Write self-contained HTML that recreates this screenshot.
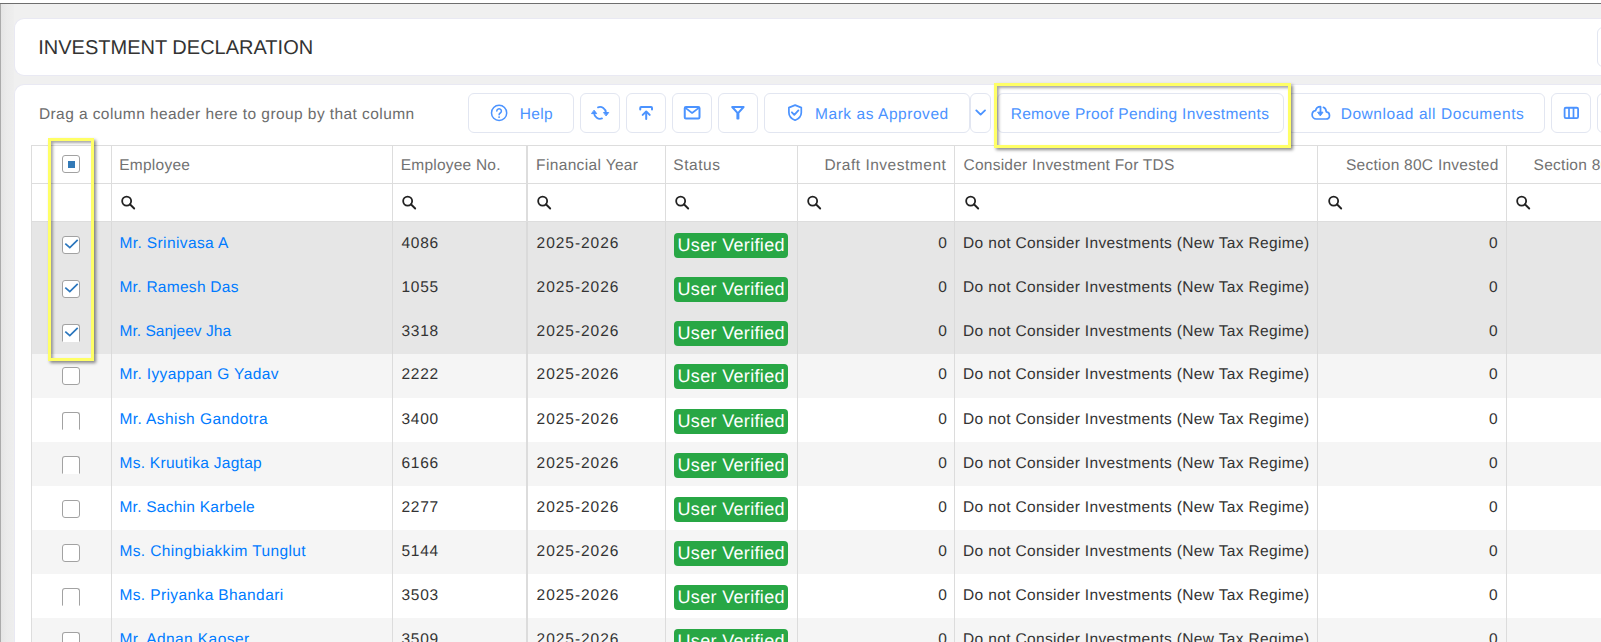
<!DOCTYPE html><html lang="en"><head><meta charset="utf-8"><title>Investment Declaration</title><style>
*{box-sizing:border-box}
html,body{margin:0;padding:0}
body{width:1601px;height:642px;overflow:hidden;position:relative;background:#fff;font-family:"Liberation Sans",sans-serif;font-size:15.5px;color:#333;text-rendering:geometricPrecision}
#frame{position:absolute;left:0;top:0;width:1601px;height:642px;overflow:hidden;background:linear-gradient(#fff 0,#fff 3px,#6e6e6e 3px,#6e6e6e 4px,#f0f0f0 4px)}
#lb{position:absolute;left:0;top:4px;width:1px;height:640px;background:#ababab}
#lshade{position:absolute;left:1px;top:4px;width:13px;height:640px;background:linear-gradient(to right,#e5e5e5,#ebebeb 45%,#eeeeee)}
.card{position:absolute;background:#fff;border-radius:9px;box-shadow:0 0 0 1px #e9e9f3}
#c1{left:15px;top:19px;width:1700px;height:56px}
#c2{left:15px;top:85px;width:1700px;height:700px}
.t{white-space:nowrap}
#title{position:absolute;left:39px;top:36px;font-size:20px;line-height:24px;color:#333;white-space:nowrap}
#drag{position:absolute;left:39px;top:105px;line-height:20px;color:#6c6c6c;white-space:nowrap}
.btn{position:absolute;top:93px;height:40px;border:1px solid #e2e6f1;border-radius:6px;background:#fff;color:#4b93ff;white-space:nowrap;line-height:38px}
.btn svg{position:absolute}
.btn .t{position:absolute;top:2px}
table{position:absolute;left:31px;top:145px;border-collapse:separate;border-spacing:0;table-layout:fixed;width:1664px}
td,th{padding:0;margin:0;font-weight:normal;white-space:nowrap;overflow:hidden;text-align:left;border-right:1px solid #ddd;position:relative}
th{height:39px;border-top:1px solid #ddd;border-bottom:1px solid #ddd;color:#727272;padding:2px 8px 0 8px}
tr.f td{height:38px;border-bottom:1px solid #ddd;padding:0 8px}
tr.r td{height:44px;padding:0 8px 1px 8px;border-right-color:#dcdcdc}
tr.r.sel td{background:#e6e6e6;border-right-color:#dadada}
tr.r.alt td{background:#f5f5f5}
tr.r.up td > *{position:relative;top:-1px}
td.first,th.first{border-left:1px solid #ddd}
td.b2,th.b2{border-right-width:2px}
.num{text-align:right}
a{color:#007bff;text-decoration:none}
.badge{position:absolute !important;left:8px;top:11px !important;width:114px;height:25px;border-radius:4px;background:#28a745;color:#fff;font-size:18px;line-height:25px;text-align:center}
tr.up .badge{top:10px !important}
.cb{position:absolute !important;left:30px;top:14px !important;width:18px;height:18px;border:1px solid #a2a2a2;border-radius:3px;background:#fff}
tr.up .cb{top:13px !important}
th .cb{top:9px !important}
.cb.nb{border-bottom-color:#fff;border-radius:3px 3px 0 0}
.cb.ind:after{content:"";position:absolute;left:5px;top:5px;width:7px;height:7px;background:#337ab7}
.cb svg{position:absolute;left:0;top:0}
.s{position:absolute;left:8.6px;top:10.5px}
#hl1,#hl2{position:absolute;border:3px solid #ffff66;box-shadow:2px 2px 3px rgba(0,0,0,.45), inset 2px 2px 3px rgba(0,0,0,.35)}
#hl1{left:48px;top:138px;width:46px;height:223px}
#hl2{left:994px;top:83px;width:297px;height:65px}
</style></head><body>
<div id="frame"><div id="lb"></div><div id="lshade"></div>
<div class="card" id="c1"></div><div class="card" id="c2"></div>
<div id="title"><span class="t " style="letter-spacing:0.002px;position:relative;left:-0.77px;">INVESTMENT DECLARATION</span></div>
<div class="btn" style="left:1597px;top:27px;width:40px"></div>
<div id="drag"><span class="t " style="letter-spacing:0.422px;position:relative;left:-0.12px;">Drag a column header here to group by that column</span></div>
<div class="btn" style="left:468px;width:106px;"><svg style="left:21px;top:10px" width="18" height="18" viewBox="0 0 18 18" fill="none" stroke="#4b93ff" stroke-width="1.8" stroke-linecap="round" stroke-linejoin="round"><circle cx="9.1" cy="8.900" r="7.600" stroke-width="1.5"/><path d="M6.800 7a2.300 2.300 0 1 1 3.500 2c-.8.500-1.200.9-1.200 1.800" stroke-width="1.500"/><circle cx="9.100" cy="13.100" r=".95" fill="#4b93ff" stroke="none"/></svg><span class="t " style="letter-spacing:0.325px;left:50.84px;">Help</span></div>
<div class="btn" style="left:580px;width:40px;"><svg style="left:9.3px;top:11px" width="20" height="16" viewBox="0 0 20 16" fill="none" stroke="#4b93ff" stroke-width="1.8" stroke-linecap="round" stroke-linejoin="round"><path d="M8 2.350A5.900 5.900 0 0 1 15.900 7.600"/><path d="M12 13.450A5.900 5.900 0 0 1 4.100 8.200"/><path d="M13.900 7.500h4.800l-2.400 3.100z" fill="#4b93ff" stroke-width="1"/><path d="M1.900 8.600h4.800l-2.400-3.100z" fill="#4b93ff" stroke-width="1"/></svg></div>
<div class="btn" style="left:626px;width:40px;"><svg style="left:11px;top:11px" width="16" height="16" viewBox="0 0 16 16" fill="none" stroke="#4b93ff" stroke-width="1.8" stroke-linecap="round" stroke-linejoin="round"><path d="M2.250 4.600V2.900a.9.900 0 0 1 .9-.9h9.950a.9.900 0 0 1 .9.900v1.700" stroke-width="2"/><path d="M8.200 14V7" stroke-width="2"/><path d="M4.700 9.900l3.500-3.400 3.500 3.400" stroke-width="2"/></svg></div>
<div class="btn" style="left:672px;width:40px;"><svg style="left:10px;top:11px" width="19" height="16" viewBox="0 0 19 16" fill="none" stroke="#4b93ff" stroke-width="1.8" stroke-linecap="round" stroke-linejoin="round"><rect x="1.750" y="2" width="14.750" height="11.500" rx="1.200" stroke-width="2"/><path d="M2.400 2.900l6.700 5.100 6.700-5.100" stroke-width="1.700"/></svg></div>
<div class="btn" style="left:718px;width:40px;"><svg style="left:11px;top:11px" width="16" height="16" viewBox="0 0 16 16" fill="none" stroke="#4b93ff" stroke-width="1.8" stroke-linecap="round" stroke-linejoin="round"><path d="M2.200 2h11.400l-5.700 6.400z" stroke-width="2"/><rect x="6.400" y="8" width="3" height="6.600" rx=".8" fill="#4b93ff" stroke="none"/></svg></div>
<div class="btn" style="left:764px;width:206px;"><svg style="left:22px;top:9px" width="17" height="19" viewBox="0 0 17 19" fill="none" stroke="#4b93ff" stroke-width="1.8" stroke-linecap="round" stroke-linejoin="round"><path d="M8.100 2.100l6.200 2.500v4.900c0 3.700-2.700 6.300-6.200 7.700-3.500-1.400-6.200-4-6.200-7.700V4.600z" stroke-width="1.700"/><path d="M4.900 9.300l2.400 2.500 4.100-4.400" stroke-width="1.800"/></svg><span class="t " style="letter-spacing:0.551px;left:50.02px;">Mark as Approved</span></div>
<div class="btn" style="left:970px;width:21px;"><svg style="left:3px;top:13px" width="14" height="11" viewBox="0 0 14 11" fill="none" stroke="#4b93ff" stroke-width="1.8" stroke-linecap="round" stroke-linejoin="round"><path d="M2.300 3.400l4.300 4.200 4.400-4.200" stroke-width="1.900"/></svg></div>
<div class="btn" style="left:997px;width:287px;"><span class="t " style="letter-spacing:0.328px;left:12.63px;">Remove Proof Pending Investments</span></div>
<div class="btn" style="left:1290px;width:255px;border-radius:2px 6px 6px 2px"><svg style="left:19px;top:10px" width="22" height="18" viewBox="0 0 22 18" fill="none" stroke="#4b93ff" stroke-width="1.8" stroke-linecap="round" stroke-linejoin="round"><path d="M10.500 2.600C7.800 2.600 6 4.300 5.600 6.700 3.600 7 2.150 8.500 2.150 10.700c0 2.400 1.750 4.300 4.150 4.300H16c2.200 0 3.500-1.600 3.500-3.600 0-2-1.200-3.400-3.250-3.600C16.200 5.600 15 4 13.400 3.300" stroke-width="1.700"/><path d="M10.500 3.500V9" stroke-width="1.800"/><path d="M8 8.200h5l-2.500 3.400z" fill="#4b93ff" stroke-width="1"/></svg><span class="t " style="letter-spacing:0.559px;left:49.64px;">Download all Documents</span></div>
<div class="btn" style="left:1551px;width:40px;"><svg style="left:11px;top:12px" width="17" height="14" viewBox="0 0 17 14" fill="none" stroke="#4b93ff" stroke-width="1.8" stroke-linecap="round" stroke-linejoin="round"><rect x="1.600" y="1.750" width="13.500" height="10.300" rx="1.300" stroke-width="1.800"/><path d="M6 1.750v10.300M10.500 1.750v10.300" stroke-width="1.700"/></svg></div>
<div class="btn" style="left:1597px;width:40px;"></div>
<table><colgroup><col style="width:81px"><col style="width:281px"><col style="width:135px"><col style="width:138px"><col style="width:132px"><col style="width:157px"><col style="width:363px"><col style="width:189px"><col style="width:188px"></colgroup>
<tr class="h"><th class="first"><div class="cb ind"></div></th><th class=""><span class="t " style="letter-spacing:0.274px;position:relative;left:-0.89px;">Employee</span></th><th class="b2"><span class="t " style="letter-spacing:0.215px;position:relative;left:-0.24px;">Employee No.</span></th><th class=""><span class="t " style="letter-spacing:0.347px;position:relative;left:0.11px;">Financial Year</span></th><th class=""><span class="t " style="letter-spacing:0.542px;position:relative;left:-0.69px;">Status</span></th><th class="num"><span class="t " style="letter-spacing:0.518px;position:relative;left:0.40px;">Draft Investment</span></th><th class=""><span class="t " style="letter-spacing:0.231px;position:relative;left:0.58px;">Consider Investment For TDS</span></th><th class="num"><span class="t " style="letter-spacing:0.263px;position:relative;left:0.60px;">Section 80C Invested</span></th><th class="num"><span class="t " style="letter-spacing:0.263px;position:relative;left:0.20px;">Section 80D Invested</span></th></tr>
<tr class="f"><td class="first"></td><td class=""><svg class="s" style="left:8.6px" width="15" height="15" viewBox="0 0 15 15"><circle cx="5.650" cy="6.100" r="4.500" fill="none" stroke="#222" stroke-width="1.800"/><path d="M8.900 9.300L13.200 13.500" stroke="#222" stroke-width="1.900" stroke-linecap="round"/></svg></td><td class="b2"><svg class="s" style="left:8.9px" width="15" height="15" viewBox="0 0 15 15"><circle cx="5.650" cy="6.100" r="4.500" fill="none" stroke="#222" stroke-width="1.800"/><path d="M8.900 9.300L13.200 13.500" stroke="#222" stroke-width="1.900" stroke-linecap="round"/></svg></td><td class=""><svg class="s" style="left:9.3px" width="15" height="15" viewBox="0 0 15 15"><circle cx="5.650" cy="6.100" r="4.500" fill="none" stroke="#222" stroke-width="1.800"/><path d="M8.900 9.300L13.200 13.500" stroke="#222" stroke-width="1.900" stroke-linecap="round"/></svg></td><td class=""><svg class="s" style="left:8.6px" width="15" height="15" viewBox="0 0 15 15"><circle cx="5.650" cy="6.100" r="4.500" fill="none" stroke="#222" stroke-width="1.800"/><path d="M8.900 9.300L13.200 13.500" stroke="#222" stroke-width="1.900" stroke-linecap="round"/></svg></td><td class=""><svg class="s" style="left:9.3px" width="15" height="15" viewBox="0 0 15 15"><circle cx="5.650" cy="6.100" r="4.500" fill="none" stroke="#222" stroke-width="1.800"/><path d="M8.900 9.300L13.200 13.500" stroke="#222" stroke-width="1.900" stroke-linecap="round"/></svg></td><td class=""><svg class="s" style="left:9.8px" width="15" height="15" viewBox="0 0 15 15"><circle cx="5.650" cy="6.100" r="4.500" fill="none" stroke="#222" stroke-width="1.800"/><path d="M8.900 9.300L13.200 13.500" stroke="#222" stroke-width="1.900" stroke-linecap="round"/></svg></td><td class=""><svg class="s" style="left:9.8px" width="15" height="15" viewBox="0 0 15 15"><circle cx="5.650" cy="6.100" r="4.500" fill="none" stroke="#222" stroke-width="1.800"/><path d="M8.900 9.300L13.200 13.500" stroke="#222" stroke-width="1.900" stroke-linecap="round"/></svg></td><td class=""><svg class="s" style="left:9.3px" width="15" height="15" viewBox="0 0 15 15"><circle cx="5.650" cy="6.100" r="4.500" fill="none" stroke="#222" stroke-width="1.800"/><path d="M8.900 9.300L13.200 13.500" stroke="#222" stroke-width="1.900" stroke-linecap="round"/></svg></td></tr>
<tr class="r sel"><td class="first"><div class="cb"><svg width="16" height="16" viewBox="0 0 16 16"><path d="M2.300 6.700L6.800 10.600L14.700 2.900" fill="none" stroke="#2a76bd" stroke-width="1.700"/></svg></div></td><td><a><span class="t " style="letter-spacing:0.392px;position:relative;left:-0.59px;">Mr. Srinivasa A</span></a></td><td class="b2"><span class="t " style="letter-spacing:0.727px;position:relative;left:0.50px;">4086</span></td><td><span class="t " style="letter-spacing:0.957px;position:relative;left:0.60px;">2025-2026</span></td><td><div class="badge"><span class="t " style="letter-spacing:0.329px;position:relative;left:0.18px;">User Verified</span></div></td><td class="num"><span class="t " style="letter-spacing:0.000px;position:relative;left:0.79px;">0</span></td><td><span class="t " style="letter-spacing:0.341px;position:relative;left:0.07px;">Do not Consider Investments (New Tax Regime)</span></td><td class="num"><span class="t " style="letter-spacing:0.000px;position:relative;left:-0.40px;">0</span></td><td class="num"><span class="t " style="letter-spacing:0.000px;position:relative;left:-0.40px;">0</span></td></tr>
<tr class="r sel"><td class="first"><div class="cb"><svg width="16" height="16" viewBox="0 0 16 16"><path d="M2.300 6.700L6.800 10.600L14.700 2.900" fill="none" stroke="#2a76bd" stroke-width="1.700"/></svg></div></td><td><a><span class="t " style="letter-spacing:0.281px;position:relative;left:-0.59px;">Mr. Ramesh Das</span></a></td><td class="b2"><span class="t " style="letter-spacing:0.727px;position:relative;left:0.50px;">1055</span></td><td><span class="t " style="letter-spacing:0.957px;position:relative;left:0.60px;">2025-2026</span></td><td><div class="badge"><span class="t " style="letter-spacing:0.329px;position:relative;left:0.18px;">User Verified</span></div></td><td class="num"><span class="t " style="letter-spacing:0.000px;position:relative;left:0.79px;">0</span></td><td><span class="t " style="letter-spacing:0.341px;position:relative;left:0.07px;">Do not Consider Investments (New Tax Regime)</span></td><td class="num"><span class="t " style="letter-spacing:0.000px;position:relative;left:-0.40px;">0</span></td><td class="num"><span class="t " style="letter-spacing:0.000px;position:relative;left:-0.40px;">0</span></td></tr>
<tr class="r sel"><td class="first"><div class="cb nb"><svg width="16" height="16" viewBox="0 0 16 16"><path d="M2.300 6.700L6.800 10.600L14.700 2.900" fill="none" stroke="#2a76bd" stroke-width="1.700"/></svg></div></td><td><a><span class="t " style="letter-spacing:0.031px;position:relative;left:-0.55px;">Mr. Sanjeev Jha</span></a></td><td class="b2"><span class="t " style="letter-spacing:0.727px;position:relative;left:0.50px;">3318</span></td><td><span class="t " style="letter-spacing:0.957px;position:relative;left:0.60px;">2025-2026</span></td><td><div class="badge"><span class="t " style="letter-spacing:0.329px;position:relative;left:0.18px;">User Verified</span></div></td><td class="num"><span class="t " style="letter-spacing:0.000px;position:relative;left:0.79px;">0</span></td><td><span class="t " style="letter-spacing:0.341px;position:relative;left:0.07px;">Do not Consider Investments (New Tax Regime)</span></td><td class="num"><span class="t " style="letter-spacing:0.000px;position:relative;left:-0.40px;">0</span></td><td class="num"><span class="t " style="letter-spacing:0.000px;position:relative;left:-0.40px;">0</span></td></tr>
<tr class="r alt up"><td class="first"><div class="cb"></div></td><td><a><span class="t " style="letter-spacing:0.371px;position:relative;left:-0.58px;">Mr. Iyyappan G Yadav</span></a></td><td class="b2"><span class="t " style="letter-spacing:0.727px;position:relative;left:0.50px;">2222</span></td><td><span class="t " style="letter-spacing:0.957px;position:relative;left:0.60px;">2025-2026</span></td><td><div class="badge"><span class="t " style="letter-spacing:0.329px;position:relative;left:0.18px;">User Verified</span></div></td><td class="num"><span class="t " style="letter-spacing:0.000px;position:relative;left:0.79px;">0</span></td><td><span class="t " style="letter-spacing:0.341px;position:relative;left:0.07px;">Do not Consider Investments (New Tax Regime)</span></td><td class="num"><span class="t " style="letter-spacing:0.000px;position:relative;left:-0.40px;">0</span></td><td class="num"><span class="t " style="letter-spacing:0.000px;position:relative;left:-0.40px;">0</span></td></tr>
<tr class="r"><td class="first"><div class="cb nb"></div></td><td><a><span class="t " style="letter-spacing:0.428px;position:relative;left:-0.62px;">Mr. Ashish Gandotra</span></a></td><td class="b2"><span class="t " style="letter-spacing:0.727px;position:relative;left:0.50px;">3400</span></td><td><span class="t " style="letter-spacing:0.957px;position:relative;left:0.60px;">2025-2026</span></td><td><div class="badge"><span class="t " style="letter-spacing:0.329px;position:relative;left:0.18px;">User Verified</span></div></td><td class="num"><span class="t " style="letter-spacing:0.000px;position:relative;left:0.79px;">0</span></td><td><span class="t " style="letter-spacing:0.341px;position:relative;left:0.07px;">Do not Consider Investments (New Tax Regime)</span></td><td class="num"><span class="t " style="letter-spacing:0.000px;position:relative;left:-0.40px;">0</span></td><td class="num"><span class="t " style="letter-spacing:0.000px;position:relative;left:-0.40px;">0</span></td></tr>
<tr class="r alt"><td class="first"><div class="cb nb"></div></td><td><a><span class="t " style="letter-spacing:0.294px;position:relative;left:-0.58px;">Ms. Kruutika Jagtap</span></a></td><td class="b2"><span class="t " style="letter-spacing:0.727px;position:relative;left:0.50px;">6166</span></td><td><span class="t " style="letter-spacing:0.957px;position:relative;left:0.60px;">2025-2026</span></td><td><div class="badge"><span class="t " style="letter-spacing:0.329px;position:relative;left:0.18px;">User Verified</span></div></td><td class="num"><span class="t " style="letter-spacing:0.000px;position:relative;left:0.79px;">0</span></td><td><span class="t " style="letter-spacing:0.341px;position:relative;left:0.07px;">Do not Consider Investments (New Tax Regime)</span></td><td class="num"><span class="t " style="letter-spacing:0.000px;position:relative;left:-0.40px;">0</span></td><td class="num"><span class="t " style="letter-spacing:0.000px;position:relative;left:-0.40px;">0</span></td></tr>
<tr class="r"><td class="first"><div class="cb"></div></td><td><a><span class="t " style="letter-spacing:0.255px;position:relative;left:-0.59px;">Mr. Sachin Karbele</span></a></td><td class="b2"><span class="t " style="letter-spacing:0.727px;position:relative;left:0.50px;">2277</span></td><td><span class="t " style="letter-spacing:0.957px;position:relative;left:0.60px;">2025-2026</span></td><td><div class="badge"><span class="t " style="letter-spacing:0.329px;position:relative;left:0.18px;">User Verified</span></div></td><td class="num"><span class="t " style="letter-spacing:0.000px;position:relative;left:0.79px;">0</span></td><td><span class="t " style="letter-spacing:0.341px;position:relative;left:0.07px;">Do not Consider Investments (New Tax Regime)</span></td><td class="num"><span class="t " style="letter-spacing:0.000px;position:relative;left:-0.40px;">0</span></td><td class="num"><span class="t " style="letter-spacing:0.000px;position:relative;left:-0.40px;">0</span></td></tr>
<tr class="r alt"><td class="first"><div class="cb"></div></td><td><a><span class="t " style="letter-spacing:0.378px;position:relative;left:-0.57px;">Ms. Chingbiakkim Tunglut</span></a></td><td class="b2"><span class="t " style="letter-spacing:0.727px;position:relative;left:0.50px;">5144</span></td><td><span class="t " style="letter-spacing:0.957px;position:relative;left:0.60px;">2025-2026</span></td><td><div class="badge"><span class="t " style="letter-spacing:0.329px;position:relative;left:0.18px;">User Verified</span></div></td><td class="num"><span class="t " style="letter-spacing:0.000px;position:relative;left:0.79px;">0</span></td><td><span class="t " style="letter-spacing:0.341px;position:relative;left:0.07px;">Do not Consider Investments (New Tax Regime)</span></td><td class="num"><span class="t " style="letter-spacing:0.000px;position:relative;left:-0.40px;">0</span></td><td class="num"><span class="t " style="letter-spacing:0.000px;position:relative;left:-0.40px;">0</span></td></tr>
<tr class="r"><td class="first"><div class="cb nb"></div></td><td><a><span class="t " style="letter-spacing:0.391px;position:relative;left:-0.62px;">Ms. Priyanka Bhandari</span></a></td><td class="b2"><span class="t " style="letter-spacing:0.727px;position:relative;left:0.50px;">3503</span></td><td><span class="t " style="letter-spacing:0.957px;position:relative;left:0.60px;">2025-2026</span></td><td><div class="badge"><span class="t " style="letter-spacing:0.329px;position:relative;left:0.18px;">User Verified</span></div></td><td class="num"><span class="t " style="letter-spacing:0.000px;position:relative;left:0.79px;">0</span></td><td><span class="t " style="letter-spacing:0.341px;position:relative;left:0.07px;">Do not Consider Investments (New Tax Regime)</span></td><td class="num"><span class="t " style="letter-spacing:0.000px;position:relative;left:-0.40px;">0</span></td><td class="num"><span class="t " style="letter-spacing:0.000px;position:relative;left:-0.40px;">0</span></td></tr>
<tr class="r alt"><td class="first"><div class="cb nb"></div></td><td><a><span class="t " style="letter-spacing:0.432px;position:relative;left:-0.58px;">Mr. Adnan Kaoser</span></a></td><td class="b2"><span class="t " style="letter-spacing:0.727px;position:relative;left:0.50px;">3509</span></td><td><span class="t " style="letter-spacing:0.957px;position:relative;left:0.60px;">2025-2026</span></td><td><div class="badge"><span class="t " style="letter-spacing:0.329px;position:relative;left:0.18px;">User Verified</span></div></td><td class="num"><span class="t " style="letter-spacing:0.000px;position:relative;left:0.79px;">0</span></td><td><span class="t " style="letter-spacing:0.341px;position:relative;left:0.07px;">Do not Consider Investments (New Tax Regime)</span></td><td class="num"><span class="t " style="letter-spacing:0.000px;position:relative;left:-0.40px;">0</span></td><td class="num"><span class="t " style="letter-spacing:0.000px;position:relative;left:-0.40px;">0</span></td></tr>
</table>
<div id="hl1"></div><div id="hl2"></div>
</div></body></html>
